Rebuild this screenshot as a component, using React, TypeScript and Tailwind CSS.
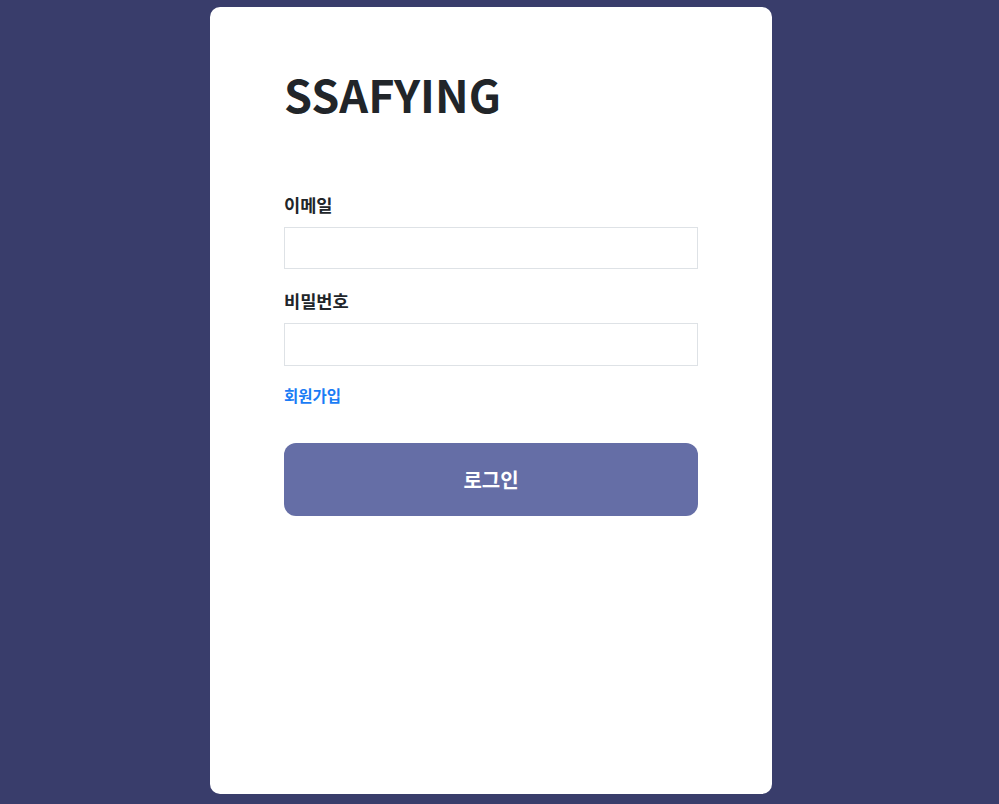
import React from "react";

export default function App() {
  return (
    <div
      className="min-h-[804px] w-full bg-[#393d6b] pt-[7px] pb-[10px]"
      style={{ fontFamily: '"Noto Sans CJK KR", "Noto Sans", sans-serif' }}
    >
      <div className="ml-[210px] w-[562px] h-[787px] rounded-[10px] bg-white px-[74px] pt-[57px]">
        <h1 className="text-[45px] leading-[60px] font-bold text-[#212529]">SSAFYING</h1>
        <div className="mt-[69px] flex flex-col">
          <label className="text-[17.6px] leading-[24px] font-bold text-[#212529]">이메일</label>
          <input className="mt-[10px] h-[42px] w-full border border-[#dee2e6] outline-none px-3" />
          <label className="mt-[20px] text-[17.6px] leading-[24px] font-bold text-[#212529]">비밀번호</label>
          <input
            type="password"
            className="mt-[10px] h-[43px] w-full border border-[#dee2e6] outline-none px-3"
          />
          <a className="mt-[18px] text-[15.5px] leading-[22px] font-bold text-[#1a7cf5] w-fit cursor-pointer">회원가입</a>
          <button className="mt-[37px] h-[73px] w-full rounded-[12px] bg-[#656ea6] text-white text-[20px] font-bold">
            로그인
          </button>
        </div>
      </div>
    </div>
  );
}
